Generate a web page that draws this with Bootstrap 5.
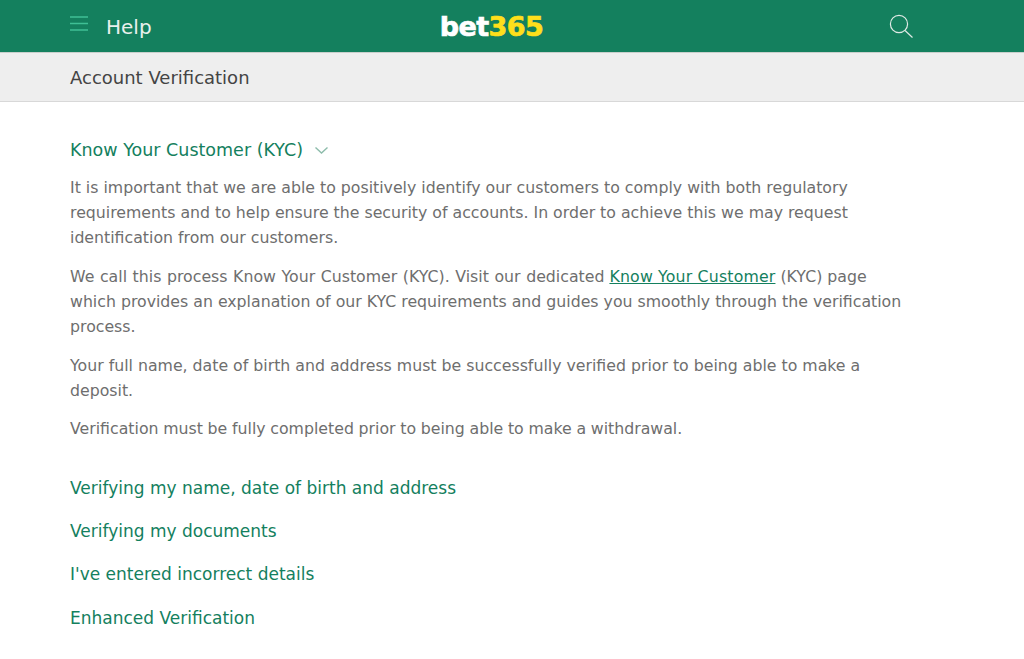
<!DOCTYPE html>
<html lang="en"><head><meta charset="utf-8"><title>Help</title>
<link href="https://cdn.jsdelivr.net/npm/bootstrap@5.3.0/dist/css/bootstrap.min.css" rel="stylesheet">
<style>
html,body{height:100%}
body{font-family:"DejaVu Sans",Verdana,sans-serif;background:#fff;color:#6b6b6b;overflow:hidden}
.topbar{height:53px;background:#14805e;border-bottom:1px solid #c9cfcc;padding:0 111px 0 70px}
.help-title{color:#e9f0ed;font-size:20px;margin-left:18px;margin-top:1px}
.menu-ico{width:18px;height:15px;display:block;margin-bottom:6px}
.logo-slot{left:0;right:0;top:0;height:52px;padding-right:41px}
.logo-text{font-family:"DejaVu Sans",sans-serif;font-weight:700;font-size:27px;letter-spacing:-.6px;color:#fff;line-height:1;-webkit-text-stroke:.7px currentColor}
.logo-text span{color:#ffdf1b}
.subbar{height:49px;background:#eeeeee;border-bottom:1px solid #d8d8d8;padding:1px 70px 0;color:#444;font-size:18px}
.content-area{padding:0 119px 0 70px}
.sect-head{color:#14805e;font-size:17.5px;margin-top:36px;margin-bottom:13.3px;line-height:24px}
.chev-ico{margin-left:12px}
.para{font-size:15.75px;line-height:25px;margin-bottom:13.7px;color:#6e6e6e}
.para a{color:#14805e;letter-spacing:.17px}
.lead-words{word-spacing:.6px}
.tight-words{word-spacing:-.3px}
.sect-link{display:block;color:#14805e;font-size:17px;line-height:24px;text-decoration:none;margin-bottom:19.2px}
.link-group{margin-top:34.6px}
</style></head><body>
<header class="topbar d-flex align-items-center justify-content-between position-relative">
<div class="d-flex align-items-center">
<svg class="menu-ico" viewBox="0 0 18 15" fill="none" stroke="#3fbf95" stroke-width="1.3"><path d="M0 1h18M0 7.5h18M0 14h18"/></svg>
<span class="help-title">Help</span>
</div>
<div class="logo-slot position-absolute d-flex align-items-center justify-content-center"><div class="logo-text">bet<span>365</span></div></div>
<svg width="24" height="24" viewBox="0 0 24 24" fill="none" stroke="#dfe9e5" stroke-width="1.2"><circle cx="10" cy="10" r="8.6"/><path d="M16 16.5l7.5 7"/></svg>
</header>
<div class="subbar d-flex align-items-center">Account Verification</div>
<main class="content-area">
<div class="sect-head d-flex align-items-center">Know Your Customer (KYC)
<svg class="chev-ico" width="13" height="7" viewBox="0 0 13 7" fill="none" stroke="#8dbcab" stroke-width="1.4"><path d="M.5.5L6.5 6l6-5.5"/></svg></div>
<p class="para">It is important that we are able to positively identify our customers to comply with both regulatory requirements and to help ensure the security of accounts. In order to achieve this we may request identification from our customers.</p>
<p class="para"><span class="lead-words">We call this process Know Your Customer (KYC). Visit our dedicated</span> <a href="#">Know Your Customer</a> (KYC) page which provides an explanation of our KYC requirements and guides you smoothly through the verification process.</p>
<p class="para">Your full name, date of birth and address must be successfully verified prior to being able to make a deposit.</p>
<p class="para tight-words">Verification must be fully completed prior to being able to make a withdrawal.</p>
<div class="link-group">
<a class="sect-link" href="#">Verifying my name, date of birth and address</a>
<a class="sect-link" href="#">Verifying my documents</a>
<a class="sect-link" href="#">I've entered incorrect details</a>
<a class="sect-link" href="#">Enhanced Verification</a>
</div>
</main>
<script src="https://cdn.jsdelivr.net/npm/bootstrap@5.3.0/dist/js/bootstrap.bundle.min.js"></script>
</body></html>
